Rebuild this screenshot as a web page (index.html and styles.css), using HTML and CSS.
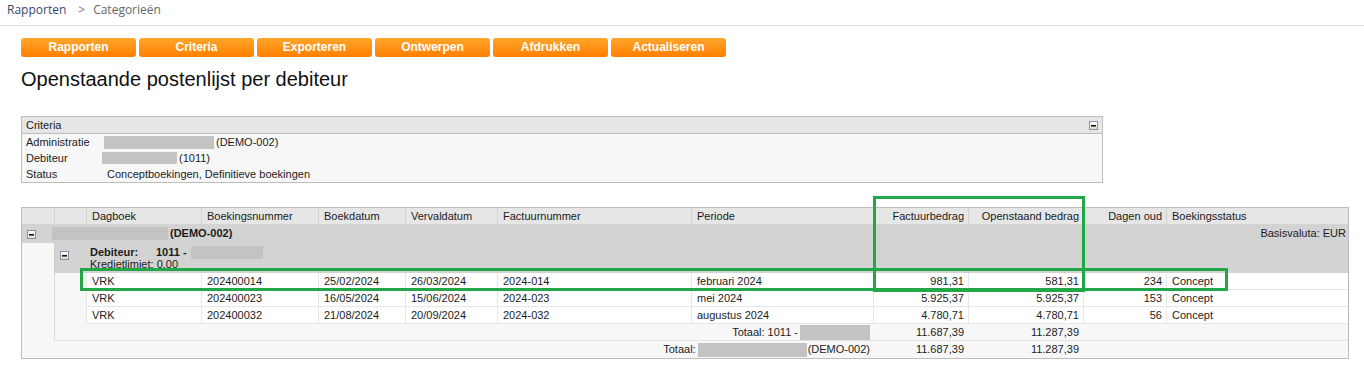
FILE: index.html
```html
<!DOCTYPE html>
<html lang="nl">
<head>
<meta charset="utf-8">
<title>Openstaande postenlijst per debiteur</title>
<link rel="stylesheet" href="styles.css">
</head>
<body>
<nav class="crumbs"><span class="crumb-link">Rapporten</span><span class="crumb-sep">&gt;</span><span class="crumb-current">Categorieën</span></nav>
<main class="page">
  <div class="toolbar">
    <button class="btn">Rapporten</button>
    <button class="btn">Criteria</button>
    <button class="btn">Exporteren</button>
    <button class="btn">Ontwerpen</button>
    <button class="btn">Afdrukken</button>
    <button class="btn">Actualiseren</button>
  </div>
  <h1 class="title">Openstaande postenlijst per debiteur</h1>

  <section class="criteria">
    <div class="crit-head">
      <span>Criteria</span>
      <svg class="minus" viewBox="0 0 9 9" width="9" height="9"><defs><linearGradient id="mg1" x1="0" y1="0" x2="0" y2="1"><stop offset="0" stop-color="#ffffff"/><stop offset="0.6" stop-color="#eef0f2"/><stop offset="1" stop-color="#e2d6b8"/></linearGradient></defs><rect x="0.5" y="0.5" width="8" height="8" fill="url(#mg1)" stroke="#8393a6"/><rect x="2" y="4" width="5" height="1.6" fill="#111"/></svg>
    </div>
    <div class="crit-row"><span class="crit-label">Administratie</span><span class="redact r-admin"></span><span class="after">(DEMO-002)</span></div>
    <div class="crit-row"><span class="crit-label">Debiteur</span><span class="redact r-deb"></span><span class="after">(1011)</span></div>
    <div class="crit-row"><span class="crit-label">Status</span><span class="status-val">Conceptboekingen, Definitieve boekingen</span></div>
  </section>

  <section class="report">
    <table class="grid">
      <colgroup>
        <col class="w32"><col class="w32"><col class="w115"><col class="w117"><col class="w87"><col class="w92"><col class="w194"><col class="w182"><col class="w95"><col class="w115"><col class="w83"><col class="w182">
      </colgroup>
      <thead>
        <tr class="head">
          <th class="first"></th><th></th><th>Dagboek</th><th>Boekingsnummer</th><th>Boekdatum</th><th>Vervaldatum</th><th>Factuurnummer</th><th>Periode</th><th class="num">Factuurbedrag</th><th class="num">Openstaand bedrag</th><th class="num">Dagen oud</th><th>Boekingsstatus</th>
        </tr>
      </thead>
      <tbody>
        <tr class="group">
          <td colspan="12">
            <div class="group-inner">
              <div class="group-left">
                <svg class="minus gi" viewBox="0 0 9 9" width="9" height="9"><defs><linearGradient id="mg2" x1="0" y1="0" x2="0" y2="1"><stop offset="0" stop-color="#ffffff"/><stop offset="0.6" stop-color="#eef0f2"/><stop offset="1" stop-color="#e2d6b8"/></linearGradient></defs><rect x="0.5" y="0.5" width="8" height="8" fill="url(#mg2)" stroke="#8393a6"/><rect x="2" y="4" width="5" height="1.6" fill="#111"/></svg>
                <span class="redact r-group"></span><strong class="after">(DEMO-002)</strong>
              </div>
              <span>Basisvaluta: EUR</span>
            </div>
          </td>
        </tr>
        <tr class="debtor">
          <td class="first"></td>
          <td colspan="11" class="debtor-cell">
            <div class="debtor-inner">
              <svg class="minus di" viewBox="0 0 9 9" width="9" height="9"><defs><linearGradient id="mg3" x1="0" y1="0" x2="0" y2="1"><stop offset="0" stop-color="#ffffff"/><stop offset="0.6" stop-color="#eef0f2"/><stop offset="1" stop-color="#e2d6b8"/></linearGradient></defs><rect x="0.5" y="0.5" width="8" height="8" fill="url(#mg3)" stroke="#8393a6"/><rect x="2" y="4" width="5" height="1.6" fill="#111"/></svg>
              <div class="debtor-text">
                <div class="debtor-line"><strong class="deb-label">Debiteur:</strong><strong>1011 -</strong><span class="redact r-debname"></span></div>
                <div class="debtor-line">Kredietlimiet: 0.00</div>
              </div>
            </div>
          </td>
        </tr>
        <tr class="data">
          <td class="first"></td><td class="indent"></td><td>VRK</td><td>202400014</td><td>25/02/2024</td><td>26/03/2024</td><td>2024-014</td><td>februari 2024</td><td class="num">981,31</td><td class="num">581,31</td><td class="num">234</td><td>Concept</td>
        </tr>
        <tr class="data">
          <td class="first"></td><td class="indent"></td><td>VRK</td><td>202400023</td><td>16/05/2024</td><td>15/06/2024</td><td>2024-023</td><td>mei 2024</td><td class="num">5.925,37</td><td class="num">5.925,37</td><td class="num">153</td><td>Concept</td>
        </tr>
        <tr class="data">
          <td class="first"></td><td class="indent"></td><td>VRK</td><td>202400032</td><td>21/08/2024</td><td>20/09/2024</td><td>2024-032</td><td>augustus 2024</td><td class="num">4.780,71</td><td class="num">4.780,71</td><td class="num">56</td><td>Concept</td>
        </tr>
        <tr class="subtotal">
          <td class="first"></td>
          <td colspan="7" class="label-cell indent"><span class="total-label">Totaal: 1011 -<span class="redact r-subtot"></span></span></td>
          <td class="num">11.687,39</td><td class="num">11.287,39</td><td colspan="2"></td>
        </tr>
        <tr class="total">
          <td colspan="8" class="label-cell"><span class="total-label">Totaal:<span class="redact r-tot"></span>(DEMO-002)</span></td>
          <td class="num">11.687,39</td><td class="num">11.287,39</td><td colspan="2"></td>
        </tr>
      </tbody>
    </table>
  </section>
</main>
<div class="mark mark-cols"></div>
<div class="mark mark-row"></div>
</body>
</html>
```
FILE: styles.css
```css
* { box-sizing: border-box; }

body {
  margin: 0;
  background: #ffffff;
  color: #1c1c1c;
  font-family: "Liberation Sans", Arial, sans-serif;
  position: relative;
}

.crumbs {
  height: 26px;
  border-bottom: 1px solid #dedede;
  padding: 1px 0 0 7px;
  display: flex;
  align-items: flex-start;
  font-family: "Open Sans", "Liberation Sans", sans-serif;
  font-size: 12px;
  line-height: 17px;
}
.crumb-link { color: #38476e; }
.crumb-sep { color: #777777; margin: 0 8px 0 12px; }
.crumb-current { color: #666666; }

.page { padding-left: 21px; }

.toolbar {
  display: flex;
  gap: 3px;
  margin-top: 12px;
}
.btn {
  width: 115px;
  height: 19px;
  padding: 0;
  border: 0;
  border-radius: 3px;
  background: linear-gradient(#ffa62c, #ff7f00);
  color: #ffffff;
  font-family: "Liberation Sans", Arial, sans-serif;
  font-weight: bold;
  font-size: 12px;
  line-height: 19px;
  text-align: center;
}

.title {
  margin: 11px 0 0;
  font-size: 20px;
  font-weight: normal;
  line-height: 23px;
  color: #111111;
}

.criteria {
  margin-top: 25px;
  width: 1082px;
  border: 1px solid #bdbdbd;
  background: #f7f7f7;
  font-size: 11px;
}
.crit-head {
  height: 17px;
  background: #e6e6e6;
  border-bottom: 1px solid #bdbdbd;
  display: flex;
  justify-content: space-between;
  align-items: center;
  padding: 0 4px 0 4px;
  line-height: 16px;
}
.crit-row {
  height: 16px;
  display: flex;
  align-items: center;
  padding-left: 4px;
  line-height: 16px;
}
.crit-label { width: 76px; flex: none; }
.status-val { padding-left: 5px; }

.minus { display: block; flex: none; }

.redact {
  display: inline-block;
  background: #c3c3c3;
  flex: none;
}
.r-admin { width: 110px; height: 13px; margin-left: 2px; }
.r-deb { width: 75px; height: 12px; }
.after { margin-left: 2px; }

.report {
  margin-top: 24px;
  width: 1328px;
  border: 1px solid #bdbdbd;
  background: #f7f7f7;
}

.grid {
  width: 1326px;
  table-layout: fixed;
  border-collapse: separate;
  border-spacing: 0;
  font-size: 11px;
  line-height: 13px;
}
.w32 { width: 32px; }
.w115 { width: 115px; }
.w117 { width: 117px; }
.w87 { width: 87px; }
.w92 { width: 92px; }
.w194 { width: 194px; }
.w182 { width: 182px; }
.w95 { width: 95px; }
.w83 { width: 83px; }

.grid th, .grid td {
  padding: 0 4px 0 5px;
  white-space: nowrap;
  overflow: hidden;
  vertical-align: middle;
}
.grid .num { text-align: right; }

.head th {
  height: 16px;
  background: #e6e6e6;
  font-weight: normal;
  text-align: left;
  border-left: 1px solid #d2d2d2;
}
.head th.num { text-align: right; }
.head th.first { border-left: 0; }

.group td {
  height: 19px;
  background: #d3d3d3;
  padding: 0 2px 0 5px;
}
.group-inner {
  display: flex;
  justify-content: space-between;
  align-items: center;
}
.group-left { display: flex; align-items: center; }
.gi { margin: 2px 16px 0 0; }
.r-group { width: 116px; height: 13px; }

.debtor td { height: 30px; }
.debtor td.first { background: #f7f7f7; }
.debtor-cell {
  background: #d3d3d3;
  border-left: 1px solid #cfcfcf;
  vertical-align: top;
}
.grid .debtor-cell { padding: 3px 0 0 5px; vertical-align: top; }
.debtor-inner { display: flex; align-items: flex-start; }
.di { margin: 5px 21px 0 0; }
.debtor-line {
  display: flex;
  align-items: center;
  height: 12px;
  line-height: 12px;
}
.deb-label { width: 66px; }
.r-debname { width: 72px; height: 13px; margin-left: 4px; margin-top: 1px; }

.data td {
  height: 17px;
  background: #ffffff;
  border-left: 1px solid #e6e6e6;
  border-bottom: 1px solid #e6e6e6;
}
.data td.first { background: transparent; border: 0; }
.data td.indent { background: #f7f7f7; border-left: 1px solid #d8d8d8; border-bottom: 0; }

.subtotal td {
  height: 17px;
  border-bottom: 1px solid #e2e2e2;
}
.subtotal td.first { border-bottom: 0; }
.subtotal td.indent { border-left: 1px solid #d8d8d8; }
.total td { height: 17px; }

.grid .label-cell { text-align: right; padding-right: 3px; }
.total-label {
  display: inline-flex;
  align-items: center;
}
.r-subtot { width: 70px; height: 15px; margin-left: 2px; }
.r-tot { width: 109px; height: 14px; margin-left: 2px; margin-right: 1px; }

.mark {
  position: absolute;
  border: 3px solid #22a748;
  pointer-events: none;
}
.mark-cols { left: 873px; top: 196px; width: 212px; height: 96px; }
.mark-row { left: 80px; top: 268px; width: 1148px; height: 23px; }
```
